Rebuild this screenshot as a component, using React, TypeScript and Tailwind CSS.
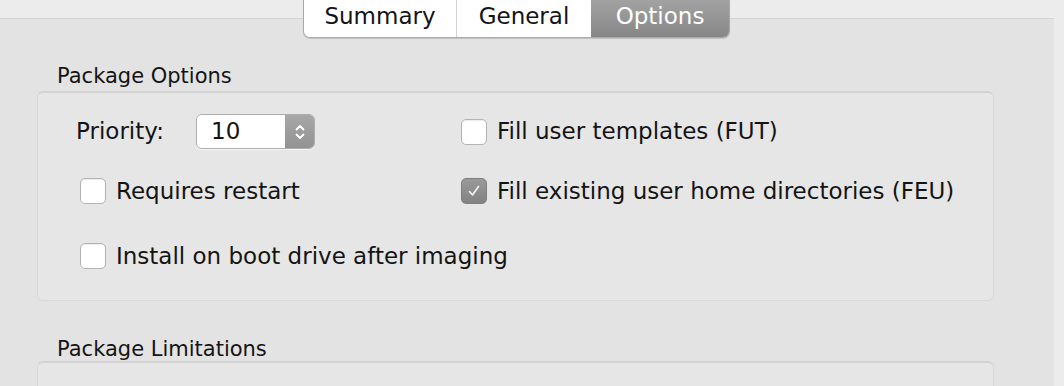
const font = "font-['DejaVu_Sans',sans-serif]"

type CheckProps = {
    label: string
    checked?: boolean
}

const Check = ({ label, checked }: CheckProps) => {
    return (
        <div className="flex items-center gap-[10px]">
            {checked ? (
                <div className="flex h-[26px] w-[26px] items-center justify-center rounded-[5px] border border-[#7f7f7f] bg-gradient-to-b from-[#9a9a9a] to-[#828282]">
                    <svg width="16" height="16" viewBox="0 0 16 16">
                        <path d="M3.5 8.5 L6.5 12 L12.5 3.5" fill="none" stroke="#f4f4f4" strokeWidth="1.6" strokeLinecap="round" strokeLinejoin="round" />
                    </svg>
                </div>
            ) : (
                <div className="h-[26px] w-[26px] rounded-[5px] border border-[#b3b3b3] bg-white shadow-[inset_0_1px_1px_rgba(0,0,0,0.08)]" />
            )}
            <span className="text-[23px] leading-none text-[#141414]">{label}</span>
        </div>
    )
}

const Stepper = () => {
    return (
        <div className="flex h-[35px] w-[119px] overflow-hidden rounded-[6px] border border-[#adadad] shadow-[0_1px_0_rgba(255,255,255,0.6)]">
            <div className="flex flex-1 items-center bg-white pl-[14px] text-[23px] leading-none text-[#141414]">10</div>
            <div className="flex w-[29px] items-center justify-center bg-gradient-to-b from-[#a8a8a8] to-[#929292]">
                <svg width="12" height="20" viewBox="0 0 12 20">
                    <path d="M2.5 7.5 L6 4 L9.5 7.5" fill="none" stroke="#ffffff" strokeWidth="1.8" strokeLinecap="round" strokeLinejoin="round" />
                    <path d="M2.5 12.5 L6 16 L9.5 12.5" fill="none" stroke="#ffffff" strokeWidth="1.8" strokeLinecap="round" strokeLinejoin="round" />
                </svg>
            </div>
        </div>
    )
}

const Tabs = () => {
    return (
        <div className="absolute left-[303px] top-0 flex h-[38px] overflow-hidden rounded-b-[7px] border border-t-0 border-[#a9a9a9] shadow-[0_1px_1px_rgba(0,0,0,0.15)]">
            <div className="flex w-[153px] items-center justify-center border-r border-[#d2d2d2] bg-white pb-[4px] text-[23px] leading-none text-[#141414]">Summary</div>
            <div className="flex w-[134px] items-center justify-center bg-white pb-[4px] text-[23px] leading-none text-[#141414]">General</div>
            <div className="flex w-[138px] items-center justify-center bg-gradient-to-b from-[#a2a2a2] to-[#878787] pb-[4px] text-[23px] leading-none text-white">Options</div>
        </div>
    )
}

export default function App() {
    return (
        <div className={`relative h-[386px] w-[1064px] overflow-hidden bg-[#ececec] ${font}`}>
            <div className="mt-[18px] h-[368px] w-[1054px] border-t border-[#d5d5d5] bg-[#e3e3e3]">
                <div className="pl-[57px] pt-[47px] text-[21px] leading-none text-[#141414]">Package Options</div>
                <div className="ml-[37px] mt-[4px] h-[210px] w-[957px] rounded-[6px] border border-[#dadada] border-t-2 border-t-[#d2d2d2] bg-[#e6e6e6] pl-[38px]">
                    <div className="mt-[21px] grid h-[35px] grid-cols-[385px_1fr] items-center">
                        <div className="flex items-center">
                            <span className="w-[120px] text-[23px] leading-none text-[#141414]">Priority:</span>
                            <Stepper />
                        </div>
                        <Check label="Fill user templates (FUT)" />
                    </div>
                    <div className="mt-[24px] grid h-[36px] grid-cols-[385px_1fr] items-center">
                        <div className="pl-[4px]">
                            <Check label="Requires restart" />
                        </div>
                        <Check label="Fill existing user home directories (FEU)" checked />
                    </div>
                    <div className="mt-[29px] flex h-[36px] items-center pl-[4px]">
                        <Check label="Install on boot drive after imaging" />
                    </div>
                </div>
                <div className="pl-[57px] pt-[38px] text-[21px] leading-none text-[#141414]">Package Limitations</div>
                <div className="ml-[37px] mt-[1px] h-[40px] w-[957px] rounded-t-[6px] border border-[#dadada] border-t-2 border-t-[#d2d2d2] bg-[#e6e6e6]" />
            </div>
            <Tabs />
        </div>
    )
}
